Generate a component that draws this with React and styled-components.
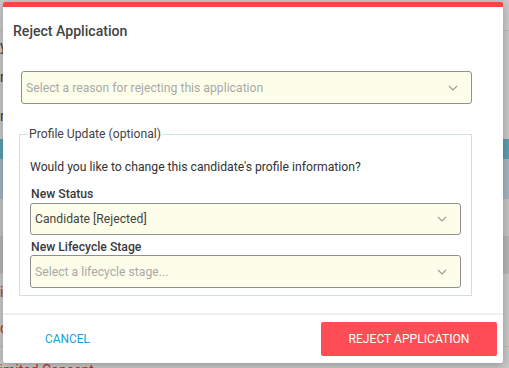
import styled, { createGlobalStyle } from 'styled-components';

const GlobalStyle = createGlobalStyle`
  html, body { margin: 0; padding: 0; }
  body {
    font-family: Roboto, "Liberation Sans", sans-serif;
    width: 509px;
    height: 368px;
    overflow: hidden;
    background: #c6c6c6;
  }
`;

const Page = styled.div`
  width: 509px;
  height: 368px;
  display: flex;
  flex-direction: column;
  background: #c7c7c7;
`;

const PageRow = styled.div`
  height: ${(p) => p.h}px;
  flex-shrink: 0;
  background: ${(p) => p.bg || 'transparent'};
  border-bottom: ${(p) => (p.line ? '1px solid #b8b8b8' : 'none')};
  color: ${(p) => p.color || '#3a3a3a'};
  font-size: 14px;
  line-height: ${(p) => p.lh || p.h}px;
  text-indent: ${(p) => p.indent || 0}px;
  white-space: nowrap;
  overflow: hidden;
`;

const Modal = styled.div`
  position: absolute;
  left: 3px;
  top: 2px;
  width: 500px;
  height: 361px;
  box-sizing: border-box;
  background: #fff;
  border-top: 5px solid #ff4343;
  border-radius: 2px;
  box-shadow: 0 2px 8px rgba(0, 0, 0, 0.25);
  display: flex;
  flex-direction: column;
`;

const Header = styled.div`
  padding: 14px 10px 0;
`;

const Title = styled.h2`
  margin: 0;
  font-size: 14.1px;
  line-height: 20px;
  font-weight: 500;
  color: #444;
`;

const Body = styled.div`
  padding: 30px 31px 0 16px;
  display: flex;
  flex-direction: column;
`;

const SelectBox = styled.div`
  height: ${(p) => p.h || 33}px;
  margin-left: ${(p) => p.indent || 0}px;
  box-sizing: border-box;
  border: 1px solid #8f8f8f;
  border-radius: 3px;
  background: #fdfee9;
  display: flex;
  align-items: center;
  justify-content: space-between;
  padding: 0 13px 0 4px;
  font-size: 12.2px;
  color: ${(p) => (p.placeholder ? '#a9a9a9' : '#444')};
`;

const Chevron = () => (
  <svg width="10" height="6" viewBox="0 0 10 6" fill="none">
    <path d="M1 1l4 4 4-4" stroke="#999" strokeWidth="1.1" />
  </svg>
);

const Fieldset = styled.fieldset`
  margin: 22px 0 0;
  padding: 0 10px 7px;
  border: 1px solid #d3e0e0;
  width: 453px;
  box-sizing: border-box;
  min-width: 0;
`;

const Legend = styled.legend`
  padding: 0 1px;
  margin-left: -2px;
  font-size: 12.2px;
  line-height: 16px;
  color: #444;
`;

const Question = styled.p`
  margin: 17px 0 11px;
  font-size: 12.2px;
  line-height: 16px;
  color: #333;
`;

const Label = styled.div`
  font-size: 12.2px;
  line-height: 16px;
  font-weight: 500;
  color: #3a3a3a;
  margin: ${(p) => p.mt || 0}px 0 ${(p) => p.mb || 0}px 1px;
`;

const Footer = styled.div`
  margin-top: 17px;
  border-top: 2px solid #eef1f1;
  padding: 7px 6px 0 25px;
  display: flex;
  align-items: center;
  justify-content: space-between;
`;

const TextButton = styled.button`
  border: none;
  background: none;
  font-family: inherit;
  font-size: 11.9px;
  color: #1b9bd8;
  padding: 0 17px;
  height: 34px;
  cursor: pointer;
`;

const DangerButton = styled.button`
  border: none;
  border-radius: 2px;
  background: #ff4d55;
  color: #fff;
  font-family: inherit;
  font-size: 12.1px;
  width: 176px;
  height: 34px;
  cursor: pointer;
`;

export default function App() {
  return (
    <>
      <GlobalStyle />
      <Page>
        <PageRow h={30} bg="#c9c9c9" line />
        <PageRow h={30}>y</PageRow>
        <PageRow h={32}>n</PageRow>
        <PageRow h={46}>r</PageRow>
        <PageRow h={20} bg="#5b9dae" />
        <PageRow h={40} bg="#a2b4c0" />
        <PageRow h={37} bg="#c2c2c2" />
        <PageRow h={37} bg="#b4b4b4" line />
        <PageRow h={36} color="#c42d2d">i</PageRow>
        <PageRow h={36} color="#c42d2d" line>d</PageRow>
        <PageRow h={30} lh={46} indent={-8} color="#c42d2d">Limited Consent</PageRow>
      </Page>
      <Modal>
        <Header>
          <Title>Reject Application</Title>
        </Header>
        <Body>
          <SelectBox placeholder indent={2}>
            <span>Select a reason for rejecting this application</span>
            <Chevron />
          </SelectBox>
          <Fieldset>
            <Legend>Profile Update (optional)</Legend>
            <Question>Would you like to change this candidate's profile information?</Question>
            <Label mb={1}>New Status</Label>
            <SelectBox h={32}>
              <span>Candidate [Rejected]</span>
              <Chevron />
            </SelectBox>
            <Label mt={4}>New Lifecycle Stage</Label>
            <SelectBox placeholder>
              <span>Select a lifecycle stage...</span>
              <Chevron />
            </SelectBox>
          </Fieldset>
        </Body>
        <Footer>
          <TextButton>CANCEL</TextButton>
          <DangerButton>REJECT APPLICATION</DangerButton>
        </Footer>
      </Modal>
    </>
  );
}
